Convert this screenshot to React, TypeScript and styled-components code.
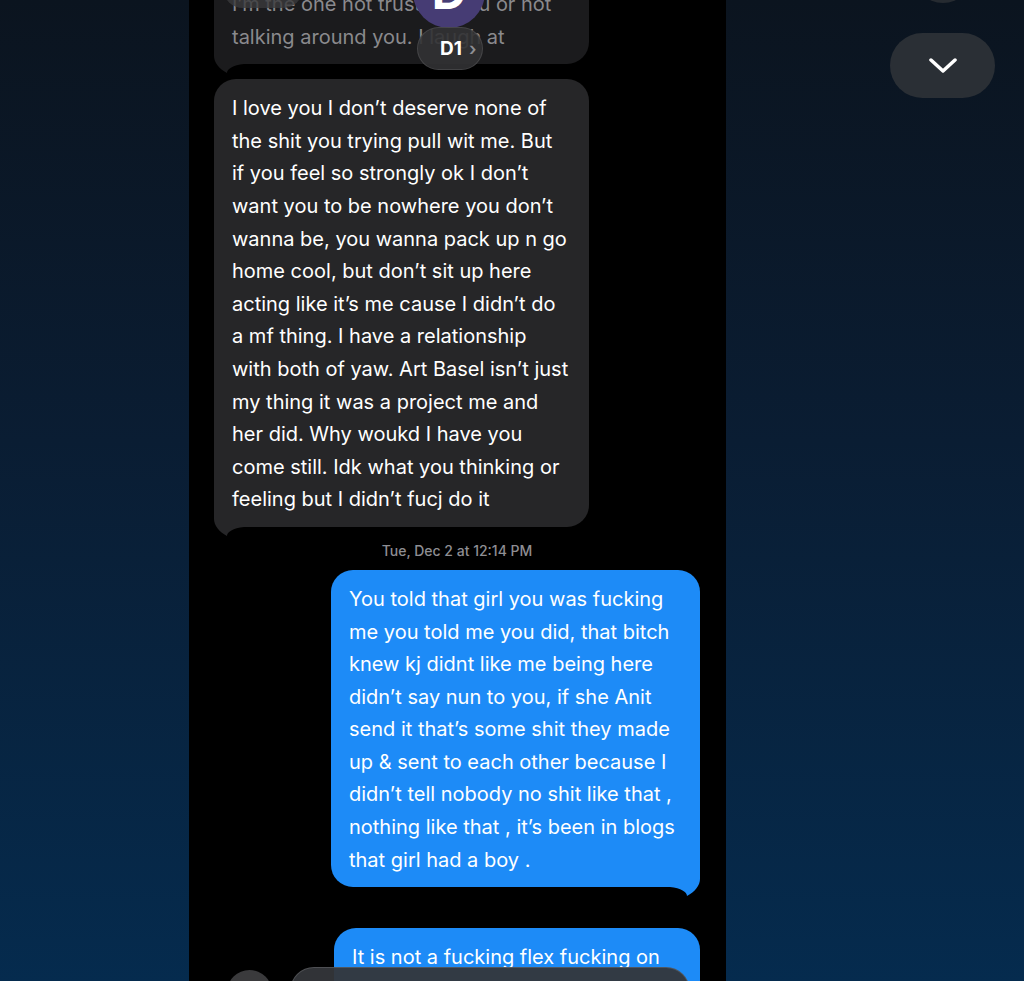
import React from "react";
import styled, { createGlobalStyle } from "styled-components";

const Global = createGlobalStyle`
  html, body { margin: 0; padding: 0; background: #0a1a2c; }
  body { font-family: Inter, "Noto Sans", sans-serif; -webkit-font-smoothing: antialiased; }
  #root { height: 981px; }
`;

const Page = styled.div`
  display: flex;
  width: 1024px;
  height: 981px;
  overflow: hidden;
  background: linear-gradient(180deg, #0b141f 0%, #0a1d33 45%, #052b4e 100%);
`;

const Gutter = styled.div`
  width: 189px;
  flex-shrink: 0;
`;

const Phone = styled.div`
  position: relative;
  width: 537px;
  flex-shrink: 0;
  background: #000;
  overflow: hidden;
  box-sizing: border-box;
  padding: 0 26px 0 25px;
`;

const Thread = styled.div`
  display: flex;
  flex-direction: column;
  margin-top: -25px;
`;

type Side = "in" | "out";

const Bubble = styled.div<{ $side: Side; $w: number; $dim?: boolean; $mt?: number }>`
  position: relative;
  align-self: ${(p) => (p.$side === "in" ? "flex-start" : "flex-end")};
  width: ${(p) => p.$w}px;
  box-sizing: border-box;
  padding: 13px 17px 11px 18px;
  border-radius: 22px;
  background: ${(p) => (p.$side === "out" ? "#1d8bf7" : p.$dim ? "#1b1b1d" : "#262628")};
  color: ${(p) => (p.$dim ? "#8a8a8d" : "#ffffff")};
  font-size: 20px;
  line-height: 32.6px;
  white-space: nowrap;
  margin-top: ${(p) => p.$mt ?? 0}px;
`;

const Line = styled.div`
  position: relative;
  z-index: 1;
`;

const TailSvg = styled.svg<{ $side: Side }>`
  position: absolute;
  bottom: -10px;
  width: 32px;
  height: 32px;
  ${(p) => (p.$side === "in" ? "left: 0;" : "right: 0; transform: scaleX(-1);")}
`;

const Stamp = styled.div`
  align-self: center;
  margin: 16px 0 11px;
  font-size: 14px;
  line-height: 16px;
  font-weight: 500;
  color: #8e8e93;
`;

const Header = styled.div`
  position: absolute;
  z-index: 5;
  top: 0;
  left: 0;
  right: 0;
  height: 72px;
  pointer-events: none;
`;

const BackPill = styled.div`
  position: absolute;
  left: 34px;
  top: -32px;
  width: 80px;
  height: 40px;
  border-radius: 20px;
  background: rgba(58, 58, 60, 0.8);
`;

const Avatar = styled.div`
  position: absolute;
  left: 224px;
  top: -44px;
  width: 72px;
  height: 72px;
  border-radius: 50%;
  background: #463c74;
  color: #fff;
  font-size: 48px;
  line-height: 48px;
  font-weight: 700;
  text-align: center;
  padding-top: 12px;
  box-sizing: border-box;
`;

const NamePill = styled.div`
  position: absolute;
  left: 228px;
  top: 27px;
  width: 66px;
  height: 43px;
  border-radius: 22px;
  background: rgba(50, 50, 52, 0.9);
  border: 1px solid rgba(255, 255, 255, 0.1);
  box-sizing: border-box;
  display: flex;
  align-items: center;
  padding-left: 22px;
  gap: 7px;
  color: #fff;
  font-size: 19px;
  font-weight: 700;
`;

const Chevron = styled.span`
  color: #8e8e93;
  font-size: 18px;
  font-weight: 600;
`;

const BottomBar = styled.div`
  position: absolute;
  z-index: 5;
  left: 38px;
  top: 967px;
  display: flex;
  gap: 18px;
  align-items: flex-start;
`;

const PlusBtn = styled.div`
  width: 45px;
  height: 45px;
  border-radius: 50%;
  background: #3a3a3c;
  margin-top: 3px;
`;

const InputPill = styled.div`
  width: 400px;
  height: 48px;
  border-radius: 24px;
  background: rgba(52, 54, 58, 0.95);
  border: 1px solid rgba(255, 255, 255, 0.14);
  box-sizing: border-box;
`;

const SidePanel = styled.div`
  flex: 1;
  display: flex;
  flex-direction: column;
  align-items: flex-start;
  padding-left: 164px;
`;

const TopCircle = styled.div`
  width: 60px;
  height: 60px;
  border-radius: 50%;
  background: #262b31;
  margin-top: -57px;
  margin-left: 23px;
`;

const DownButton = styled.div`
  margin-top: 30px;
  width: 105px;
  height: 65px;
  border-radius: 33px;
  background: #2a2f35;
  display: flex;
  align-items: center;
  justify-content: center;
`;

const Tail = ({ side, color }: { side: Side; color: string }) => (
  <TailSvg $side={side} viewBox="0 0 32 32">
    <path d="M0 0 V14 C0 20 5 27 13 31 C13 27 19 23 30 22 H32 V0 Z" fill={color} />
  </TailSvg>
);

const topLines = ["I’m the one not trusting you or not", "talking around you. I laugh at"];

const greyLines = [
  "I love you I don’t deserve none of",
  "the shit you trying pull wit me. But",
  "if you feel so strongly ok I don’t",
  "want you to be nowhere you don’t",
  "wanna be, you wanna pack up n go",
  "home cool, but don’t sit up here",
  "acting like it’s me cause I didn’t do",
  "a mf thing. I have a relationship",
  "with both of yaw. Art Basel isn’t just",
  "my thing it was a project me and",
  "her did. Why woukd I have you",
  "come still. Idk what you thinking or",
  "feeling but I didn’t fucj do it",
];

const blueLines = [
  "You told that girl you was fucking",
  "me you told me you did, that bitch",
  "knew kj didnt like me being here",
  "didn’t say nun to you, if she Anit",
  "send it that’s some shit they made",
  "up & sent to each other because I",
  "didn’t tell nobody no shit like that ,",
  "nothing like that , it’s been in blogs",
  "that girl had a boy .",
];

const blue2Lines = ["It is not a fucking flex fucking on", "me like that in front of people"];

export default function App() {
  return (
    <>
      <Global />
      <Page>
        <Gutter />
        <Phone>
          <Thread>
            <Bubble $side="in" $w={375} $dim>
              {topLines.map((l) => (
                <Line key={l}>{l}</Line>
              ))}
              <Tail side="in" color="#1b1b1d" />
            </Bubble>
            <Bubble $side="in" $w={375} $mt={15}>
              {greyLines.map((l) => (
                <Line key={l}>{l}</Line>
              ))}
              <Tail side="in" color="#262628" />
            </Bubble>
            <Stamp>Tue, Dec 2 at 12:14 PM</Stamp>
            <Bubble $side="out" $w={369}>
              {blueLines.map((l) => (
                <Line key={l}>{l}</Line>
              ))}
              <Tail side="out" color="#1d8bf7" />
            </Bubble>
            <Bubble $side="out" $w={366} $mt={41}>
              {blue2Lines.map((l) => (
                <Line key={l}>{l}</Line>
              ))}
            </Bubble>
          </Thread>
          <Header>
            <BackPill />
            <Avatar>D</Avatar>
            <NamePill>
              D1<Chevron>›</Chevron>
            </NamePill>
          </Header>
          <BottomBar>
            <PlusBtn />
            <InputPill />
          </BottomBar>
        </Phone>
        <SidePanel>
          <TopCircle />
          <DownButton>
            <svg width="28" height="16" viewBox="0 0 28 16">
              <path d="M2 2 L14 13 L26 2" fill="none" stroke="#fff" strokeWidth="3.5" strokeLinecap="round" strokeLinejoin="round" />
            </svg>
          </DownButton>
        </SidePanel>
      </Page>
    </>
  );
}
